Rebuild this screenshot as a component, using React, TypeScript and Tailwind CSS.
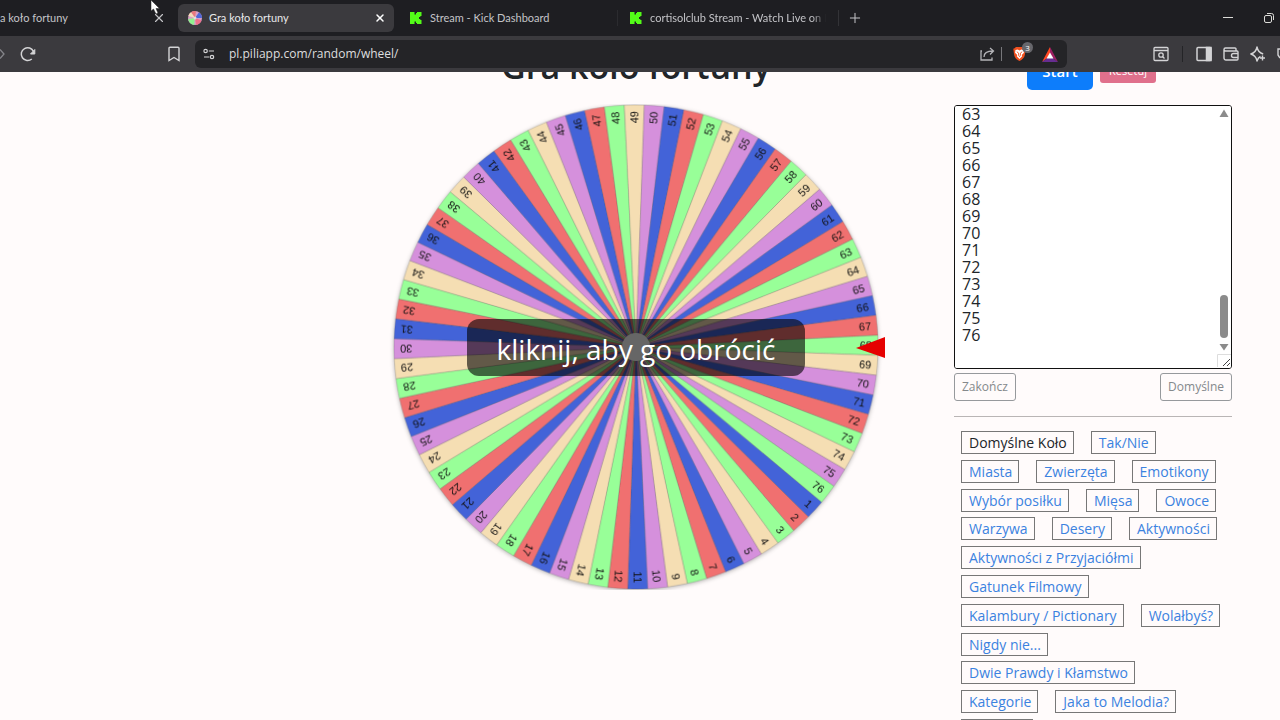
import { useEffect, useRef, useState } from 'react';
import { Plus, X } from 'lucide-react';

const COLORS = ['#4363d8', '#f07070', '#98ff98', '#f5deb3', '#d590dc'];
const COUNT = 76;
const RADIUS = 242;
const STEP = 360 / COUNT;

const TAG_ROWS = [
  ['Domyślne Koło', 'Tak/Nie'],
  ['Miasta', 'Zwierzęta', 'Emotikony'],
  ['Wybór posiłku', 'Mięsa', 'Owoce'],
  ['Warzywa', 'Desery', 'Aktywności'],
  ['Aktywności z Przyjaciółmi'],
  ['Gatunek Filmowy'],
  ['Kalambury / Pictionary', 'Wolałbyś?'],
  ['Nigdy nie...'],
  ['Dwie Prawdy i Kłamstwo'],
  ['Kategorie', 'Jaka to Melodia?'],
  ['Prezenty'],
];

const DEFAULT_ITEMS = Array.from({ length: COUNT }, (_, i) => String(i + 1)).join('\n') + '\n';

// the last slice touches the first one, so it must not be blue again
function sliceColor(n: number) {
  return n === COUNT ? COLORS[2] : COLORS[(n - 1) % COLORS.length];
}

function point(deg: number) {
  const rad = (deg * Math.PI) / 180;
  return `${(RADIUS * Math.cos(rad)).toFixed(2)} ${(RADIUS * Math.sin(rad)).toFixed(2)}`;
}

function KickIcon() {
  return (
    <svg viewBox="0 0 14 14" className="w-3.5 h-3.5 shrink-0">
      <path fill="#53fc18" d="M1 1h4.500v2.500H7V2h1V1h4.500v4h-1.200v1H10v2h1.300v1h1.200v4H8v-1H7v-1.500H5.500V13H1z" />
    </svg>
  );
}

function WheelIcon() {
  return (
    <svg viewBox="0 0 14 14" className="w-3.5 h-3.5 shrink-0">
      <circle cx="7" cy="7" r="7" fill="#d8a0c8" />
      <path fill="#e8787c" d="M7 7 3 1.300A7 7 0 0 1 8 .1z" />
      <path fill="#5068d8" d="M7 7 11 1.300A7 7 0 0 1 14 7z" />
      <path fill="#f0708c" d="M7 7 13.500 9.500A7 7 0 0 1 8 13.900z" />
      <path fill="#90f090" d="M7 7 6 13.900A7 7 0 0 1 .1 8z" />
      <path fill="#f3dcb8" d="M7 7 .3 5A7 7 0 0 1 3 1.300z" />
      <circle cx="7" cy="7" r="1.500" fill="#ddd" />
    </svg>
  );
}

function TabBar() {
  return (
    <nav className="flex items-center h-9 font-['Lato','Open_Sans',sans-serif] text-[11px] text-[#c4c4c8]" aria-label="Karty">
      <div className="flex items-center justify-between w-[178px] shrink-0 pr-3">
        <span>a koło fortuny</span>
        <button aria-label="Zamknij kartę"><X className="w-3.5 h-3.5" /></button>
      </div>
      <div className="flex items-center w-[216px] h-7 shrink-0 rounded-md bg-[#3b3a3e] pl-2.5 pr-2 text-[#e8e8ea]">
        <WheelIcon />
        <span className="ml-[7px] flex-1">Gra koło fortuny</span>
        <button aria-label="Zamknij kartę"><X className="w-3 h-3 text-white" strokeWidth={3} /></button>
      </div>
      <div className="flex items-center gap-[7px] w-[224px] shrink-0 pl-[15px] border-r border-[#2b2b2f]">
        <KickIcon />
        <span>Stream - Kick Dashboard</span>
      </div>
      <div className="flex items-center gap-[7px] w-[221px] shrink-0 pl-[11px] pr-3 border-r border-[#333337]">
        <KickIcon />
        <span className="flex-1 overflow-hidden whitespace-nowrap [mask-image:linear-gradient(to_right,#000_92%,transparent)]">
          cortisolclub Stream - Watch Live on K
        </span>
      </div>
      <button className="ml-2" aria-label="Nowa karta"><Plus className="w-4 h-4" strokeWidth={1.5} /></button>
      <div className="ml-auto flex items-center gap-[29px] pr-[5px]">
        <button aria-label="Minimalizuj">
          <svg viewBox="0 0 12 12" className="w-3 h-3" stroke="#dcdcd8"><path d="M1 5.500h10" /></svg>
        </button>
        <button aria-label="Przywróć">
          <svg viewBox="0 0 12 12" className="w-3 h-3" fill="none" stroke="#dcdcd8">
            <rect x="1.500" y="3.500" width="7" height="7" rx="1.500" />
            <path d="M4 1.500h4.500a2 2 0 0 1 2 2V8" />
          </svg>
        </button>
      </div>
    </nav>
  );
}

function AddressBar() {
  return (
    <div className="flex items-center h-9 bg-[#3b3a3e] text-[#d4d4d6]">
      <div className="flex items-center w-[195px] shrink-0">
        <button aria-label="Dalej">
          <svg viewBox="0 0 5 12" className="w-[5px] h-3" fill="none" stroke="#85858a" strokeWidth="1.300"><path d="M0 1.500 4 6 0 10.500" /></svg>
        </button>
        <button className="ml-3.5" aria-label="Odśwież">
          <svg viewBox="0 0 18 18" className="w-[18px] h-[18px]" fill="none" stroke="currentColor" strokeWidth="1.500">
            <path d="M12.800 14A6.400 6.400 0 1 1 14.500 6.500" />
            <path d="M15.800 4.500V9H11.500z" fill="currentColor" strokeWidth="1" strokeLinejoin="round" />
          </svg>
        </button>
        <button className="ml-auto mr-[14px]" aria-label="Dodaj zakładkę">
          <svg viewBox="0 0 14 16" className="w-3.5 h-4" fill="none" stroke="currentColor" strokeWidth="1.400">
            <path d="M3 1.200h8a1 1 0 0 1 1 1V14.500L7 11.500 2 14.500V2.200a1 1 0 0 1 1-1z" />
          </svg>
        </button>
      </div>
      <div className="flex items-center flex-1 h-7 rounded-md bg-[#242427] px-2">
        <svg viewBox="0 0 12 12" className="w-3 h-3" fill="none" stroke="currentColor" strokeWidth="1.200">
          <circle cx="2.600" cy="3" r="1.700" />
          <path d="M5.800 3H11M1 9h5.300" />
          <circle cx="9" cy="9" r="1.700" />
        </svg>
        <input
          aria-label="Adres strony"
          className="ml-3.5 flex-1 min-w-0 bg-transparent text-[12px] text-[#dededf] outline-none"
          defaultValue="pl.piliapp.com/random/wheel/"
        />
        <svg viewBox="0 0 16 16" className="w-4 h-4" fill="none" stroke="#b4b4b8" strokeWidth="1.300">
          <path d="M3 5H2v9h11v-2.500M5 11c0-4 3-6 9-6M11 2l3.500 3L11 8.500" />
        </svg>
        <span className="w-px h-3.5 ml-1.5 mr-2.5 bg-[#77777b]" />
        <div className="relative">
          <svg viewBox="0 0 16 18" className="w-[15px] h-4">
            <path fill="#f0501f" d="M4 1h8l1.500 1.500 1.500.5-1 7c-.5 3-3 5.500-6 7-3-1.500-5.500-4-6-7L1 3l1.500-.5z" />
            <path fill="#fff" d="M3.500 4.500 6 4l2 1 2-1 2.500.5.500 3-2.500 2.500.5 1.500L8 14.500 5 11.500l.5-1.500L3 7.500z" />
            <path fill="none" stroke="#f0501f" d="M5 6.500 7 8v2.500L8 12l1-1.500V8l2-1.500" />
          </svg>
          <span className="absolute -top-1 left-2.5 w-[11px] h-[11px] rounded-full bg-[#67676c] text-center text-[8px] leading-[11px] text-white">3</span>
        </div>
        <svg viewBox="0 0 16 15" className="w-4 h-[15px] ml-[15px] mr-px">
          <path fill="#ff4724" d="M8 0 0 15l8-6z" />
          <path fill="#9e1f63" d="M8 0l8 15-8-6z" />
          <path fill="#662d91" d="M0 15h16L8 9z" />
          <path fill="#fff" d="M8 5.500 11.500 11.500h-7z" />
        </svg>
      </div>
      <div className="flex items-center w-[213px] shrink-0 justify-end overflow-hidden">
        <svg viewBox="0 0 16 16" className="w-4 h-4 shrink-0" fill="none" stroke="currentColor" strokeWidth="1.300">
          <rect x="1" y="1.500" width="14" height="13" rx="1" />
          <path d="M1 4.500h14M9.500 10.500l2 2" />
          <circle cx="8" cy="9" r="2.200" />
        </svg>
        <span className="w-px h-4 ml-[13px] mr-[13px] bg-[#242427]" />
        <svg viewBox="0 0 16 16" className="w-4 h-4 shrink-0" fill="none" stroke="currentColor" strokeWidth="1.500">
          <rect x="1" y="1.500" width="14" height="13" rx="1" />
          <path d="M10.500 1.500H15v13h-4.500z" fill="currentColor" />
        </svg>
        <svg viewBox="0 0 16 16" className="w-4 h-4 ml-[11px] shrink-0" fill="none" stroke="currentColor" strokeWidth="1.400">
          <path d="M13 4.500V3a1 1 0 0 0-1-1H2.500a1.500 1.500 0 0 0 0 3H14a1 1 0 0 1 1 1v7a1 1 0 0 1-1 1H3a2 2 0 0 1-2-2V3.500" />
          <path d="M15 7.500h-4.500a2 2 0 0 0 0 4H15" />
        </svg>
        <svg viewBox="0 0 16 16" className="w-4 h-4 ml-[11px] shrink-0" fill="none" stroke="currentColor" strokeWidth="1.400">
          <path d="M10.500 10.500C8.800 11.300 7.800 12.500 7 15 6.200 10.800 4.500 9 .8 8 4.500 7 6.200 5.200 7 1c.8 4.200 2.500 6 6.200 7" strokeLinejoin="round" />
          <path d="M12.500 9.500v5M10 12h5" />
        </svg>
        <svg viewBox="0 0 3 16" className="w-[3px] h-4 ml-[11px] shrink-0" fill="none" stroke="currentColor" strokeWidth="1.400">
          <path d="M3 3H1v6l2 3" />
        </svg>
      </div>
    </div>
  );
}

function Wheel() {
  const [turn, setTurn] = useState(-0.4);

  return (
    <div className="relative flex justify-center">
      <svg viewBox="-250 -243 500 486" className="w-[500px] h-[486px]" role="img" aria-label="Koło fortuny">
        <g
          className="transition-transform duration-[4000ms] ease-out drop-shadow-[0_1px_2px_rgba(0,0,0,0.3)]"
          style={{ transform: `rotate(${turn}deg)` }}
        >
          {Array.from({ length: COUNT }, (_, i) => {
            const n = i + 1;
            const mid = (n - 68) * STEP;
            return (
              <g key={n}>
                <path
                  d={`M0 0L${point(mid - STEP / 2)}A${RADIUS} ${RADIUS} 0 0 1 ${point(mid + STEP / 2)}z`}
                  fill={sliceColor(n)}
                  stroke="#444"
                  strokeOpacity="0.5"
                  strokeWidth="0.4"
                />
                <text
                  x={RADIUS - 6}
                  y="4"
                  textAnchor="end"
                  transform={`rotate(${mid})`}
                  className="font-['Liberation_Sans',sans-serif] text-[11px]"
                  fill="#111"
                >
                  {n}
                </text>
              </g>
            );
          })}
          <circle r="14" fill="#fff" />
        </g>
        <path d="M220 1 249-10v21z" fill="#e60000" />
      </svg>
      <button
        onClick={() => setTurn(t => t + 1440 + Math.random() * 360)}
        className="absolute top-[215px] h-[57px] w-[338px] rounded-xl bg-black/60 pt-0.5 text-[28px] leading-10 whitespace-nowrap text-white cursor-pointer"
      >
        kliknij, aby go obrócić
      </button>
    </div>
  );
}

function ItemsBox() {
  const boxRef = useRef<HTMLTextAreaElement>(null);

  useEffect(() => {
    if (boxRef.current) boxRef.current.scrollTop = boxRef.current.scrollHeight;
  }, []);

  return (
    <div className="relative h-[264px]">
      <textarea
        ref={boxRef}
        aria-label="Elementy koła"
        defaultValue={DEFAULT_ITEMS}
        className="block w-full h-full resize-none rounded-[3px] border border-[#111] bg-white px-[7px] py-[7px] text-[16px] leading-[17px] text-[#212529] outline-none [scrollbar-width:none]"
      />
      <svg viewBox="0 0 14 260" className="absolute top-0.5 right-px w-3.5 h-[260px] pointer-events-none" fill="#8b8b8b">
        <path d="M2.500 10 7 2.500 11.500 10z" />
        <rect x="3" y="188" width="8" height="43" rx="4" />
        <path d="M2.500 237h9L7 243.500z" />
        <path d="M.5 260v-12.500H14" fill="none" stroke="#ddd" />
        <path d="M6 259l7-7M10 259l3-3" fill="none" stroke="#444" />
      </svg>
    </div>
  );
}

function Sidebar() {
  const [active, setActive] = useState('Domyślne Koło');

  return (
    <aside className="w-[278px] pt-px">
      <ItemsBox />
      <div className="flex justify-between mt-1 text-[12px] text-[#85898c]">
        <button className="h-7 px-[7px] rounded-[3px] border border-[#96999c]">Zakończ</button>
        <button className="h-7 px-[7px] rounded-[3px] border border-[#96999c]">Domyślne</button>
      </div>
      <hr className="mt-[15px] border-[#b9b5b5]" />
      <div className="flex flex-col justify-between h-[311px] mt-3.5 pl-[7px] text-[14px]">
        {TAG_ROWS.map(row => (
          <div key={row[0]} className="flex gap-[17px]">
            {row.map(tag => (
              <a
                key={tag}
                href="#"
                onClick={() => setActive(tag)}
                className={`h-[23px] pl-[7px] pr-1.5 border border-[#777] leading-[22px] whitespace-nowrap ${
                  tag === active ? 'text-[#212529]' : 'text-[#3b82e0]'
                }`}
              >
                {tag}
              </a>
            ))}
          </div>
        ))}
      </div>
    </aside>
  );
}

export default function App() {
  return (
    <div className="flex flex-col h-screen overflow-hidden bg-[#fffbfb] font-['Open_Sans','Noto_Sans',sans-serif]">
      <header className="relative shrink-0 bg-[#1e1e22]">
        <TabBar />
        <AddressBar />
        {/* mouse pointer */}
        <svg viewBox="0 0 12 16" className="absolute top-0 left-[150px] w-3 h-4 pointer-events-none">
          <path d="M1 0v11l2.500-2 2.500 5 2-1-2-4.500h3.500z" fill="#fff" stroke="#222" strokeWidth="0.500" />
        </svg>
      </header>

      {/* Page, scrolled down a little */}
      <main className="flex-1 overflow-hidden">
        <div className="-mt-10 grid grid-cols-[1fr_2fr_326px]">
          <h1 className="col-start-2 h-[72px] pt-3.5 text-center text-[34px] leading-10 font-semibold text-[#212529]">
            Gra koło fortuny
          </h1>
          <div className="flex items-center justify-center gap-[7px] w-[278px] h-[38px] mt-5 pr-[3px] text-white">
            <button className="h-[38px] w-[66px] rounded-[5px] bg-[#0d7dfb] text-[15px] font-semibold">Start</button>
            <button className="h-6 w-14 rounded-[3px] bg-[#e0708c] text-[11px]">Resetuj</button>
          </div>
          <div className="col-start-2">
            <Wheel />
          </div>
          <Sidebar />
        </div>
      </main>
    </div>
  );
}
